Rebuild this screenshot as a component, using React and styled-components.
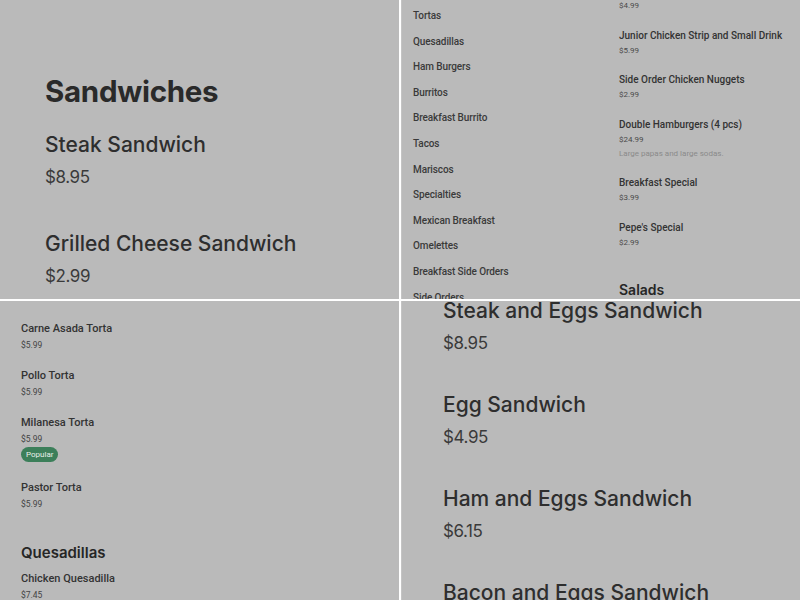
import React from "react"
import styled, { createGlobalStyle } from "styled-components"

const GlobalStyle = createGlobalStyle`
  html, body {
    margin: 0;
    padding: 0;
    background: #ffffff;
  }
`

const bigItems1 = [
  { name: "Steak Sandwich", price: "$8.95" },
  { name: "Grilled Cheese Sandwich", price: "$2.99" },
]

const bigItems2 = [
  { name: "Steak and Eggs Sandwich", price: "$8.95" },
  { name: "Egg Sandwich", price: "$4.95" },
  { name: "Ham and Eggs Sandwich", price: "$6.15" },
  { name: "Bacon and Eggs Sandwich", price: "$3.95" },
]

const categories = [
  "Tortas",
  "Quesadillas",
  "Ham Burgers",
  "Burritos",
  "Breakfast Burrito",
  "Tacos",
  "Mariscos",
  "Specialties",
  "Mexican Breakfast",
  "Omelettes",
  "Breakfast Side Orders",
  "Side Orders",
]

const specials = [
  { name: "Junior Chicken Strip and Small Drink", price: "$5.99" },
  { name: "Side Order Chicken Nuggets", price: "$2.99" },
  { name: "Double Hamburgers (4 pcs)", price: "$24.99", desc: "Large papas and large sodas." },
  { name: "Breakfast Special", price: "$3.99" },
  { name: "Pepe's Special", price: "$2.99" },
]

const tortas = [
  { name: "Carne Asada Torta", price: "$5.99" },
  { name: "Pollo Torta", price: "$5.99" },
  { name: "Milanesa Torta", price: "$5.99", popular: true },
  { name: "Pastor Torta", price: "$5.99" },
]

const App = () => {
  return (
    <>
      <GlobalStyle />
      <Grid>
        <Panel $pad="45px">
          <BigHeading>Sandwiches</BigHeading>
          {bigItems1.map((it) => (
            <BigItem key={it.name} $gap="41px">
              <BigName>{it.name}</BigName>
              <BigPrice>{it.price}</BigPrice>
            </BigItem>
          ))}
        </Panel>

        <Panel $pad="11px" $edge>
          <Columns>
            <CategoryList>
              {categories.map((c) => (
                <Category key={c}>{c}</Category>
              ))}
            </CategoryList>
            <SmallColumn>
              <LeadPrice>$4.99</LeadPrice>
              {specials.map((it) => (
                <SmallItem key={it.name}>
                  <SmallName>{it.name}</SmallName>
                  <SmallPrice>{it.price}</SmallPrice>
                  {it.desc && <Desc>{it.desc}</Desc>}
                </SmallItem>
              ))}
              <SectionTitle $top="16px">Salads</SectionTitle>
            </SmallColumn>
          </Columns>
        </Panel>

        <Panel $pad="21px">
          <ListWrap>
            {tortas.map((it) => (
              <MidItem key={it.name}>
                <MidName>{it.name}</MidName>
                <MidPrice>{it.price}</MidPrice>
                {it.popular && <Badge>Popular</Badge>}
              </MidItem>
            ))}
            <SectionTitle $top="16px" $size="15px">Quesadillas</SectionTitle>
            <MidItem>
              <MidName>Chicken Quesadilla</MidName>
              <MidPrice>$7.45</MidPrice>
            </MidItem>
          </ListWrap>
        </Panel>

        <Panel $pad="41px" $edge>
          <BigList>
            {bigItems2.map((it) => (
              <BigItem key={it.name} $gap="36px">
                <BigName>{it.name}</BigName>
                <BigPrice>{it.price}</BigPrice>
              </BigItem>
            ))}
          </BigList>
        </Panel>
      </Grid>
    </>
  )
}

const Grid = styled.div`
  display: grid;
  grid-template-columns: 399px 399px;
  grid-template-rows: 299px 299px;
  gap: 2px;
  width: 800px;
  height: 600px;
  background: #ffffff;
`

const Panel = styled.div`
  background: #bababa;
  overflow: hidden;
  padding-left: ${(p) => p.$pad};
  box-sizing: border-box;
  border-left: ${(p) => (p.$edge ? "1px solid #c4c4c4" : "none")};
  color: #2c2c2c;
`

const BigHeading = styled.h2`
  margin: 73px 0 22px;
  font-family: Inter, "Liberation Sans", sans-serif;
  font-weight: 700;
  font-size: 29.5px;
  line-height: 36px;
  letter-spacing: -0.3px;
  color: #2a2a2a;
`

const BigList = styled.div`
  margin-top: -4px;
`

const BigItem = styled.div`
  padding-bottom: ${(p) => p.$gap};
`

const BigName = styled.div`
  font-family: Inter, "Liberation Sans", sans-serif;
  font-weight: 500;
  font-size: 21px;
  line-height: 28px;
  margin-bottom: 6px;
  color: #2e2e2e;
`

const BigPrice = styled.div`
  font-family: Inter, "Liberation Sans", sans-serif;
  font-size: 17px;
  line-height: 24px;
  letter-spacing: -0.4px;
  color: #3a3a3a;
`

const Columns = styled.div`
  display: grid;
  grid-template-columns: 206px 1fr;
`

const CategoryList = styled.ul`
  list-style: none;
  margin: 3px 0 0;
  padding: 0;
`

const Category = styled.li`
  font-family: Roboto, "Liberation Sans", sans-serif;
  font-weight: 500;
  font-size: 10px;
  line-height: 25.6px;
  letter-spacing: -0.1px;
  color: #3a3a3a;
`

const SmallColumn = styled.div`
  margin-top: -2.5px;
`

const LeadPrice = styled.div`
  font-family: Roboto, "Liberation Sans", sans-serif;
  font-size: 8px;
  line-height: 15px;
  color: #4a4a4a;
  padding-bottom: 15px;
`

const SmallItem = styled.div`
  padding-bottom: 14.5px;
`

const SmallName = styled.div`
  font-family: Roboto, "Liberation Sans", sans-serif;
  font-weight: 500;
  font-size: 10px;
  line-height: 15px;
  color: #333333;
`

const SmallPrice = styled.div`
  font-family: Roboto, "Liberation Sans", sans-serif;
  font-size: 8px;
  line-height: 15px;
  color: #4a4a4a;
`

const Desc = styled.div`
  font-family: Roboto, "Liberation Sans", sans-serif;
  font-size: 8px;
  line-height: 14px;
  color: #8a8a8a;
`

const SectionTitle = styled.h3`
  margin: ${(p) => p.$top} 0 8px;
  font-family: Inter, "Liberation Sans", sans-serif;
  font-weight: 600;
  font-size: ${(p) => p.$size || "14px"};
  line-height: 20px;
  color: #262626;
`

const ListWrap = styled.div`
  padding-top: 20px;
`

const MidItem = styled.div`
  padding-bottom: 15px;
`

const MidName = styled.div`
  font-family: Roboto, "Liberation Sans", sans-serif;
  font-weight: 500;
  font-size: 11px;
  line-height: 16px;
  color: #333333;
`

const MidPrice = styled.div`
  font-family: Roboto, "Liberation Sans", sans-serif;
  font-size: 8.5px;
  line-height: 16px;
  color: #444444;
`

const Badge = styled.div`
  width: fit-content;
  margin: 0 0 3px;
  padding: 0 5px;
  height: 15px;
  line-height: 15px;
  border-radius: 8px;
  background: #3c7f5a;
  color: #e8efe9;
  font-family: Roboto, "Liberation Sans", sans-serif;
  font-size: 8px;
`

export default App
